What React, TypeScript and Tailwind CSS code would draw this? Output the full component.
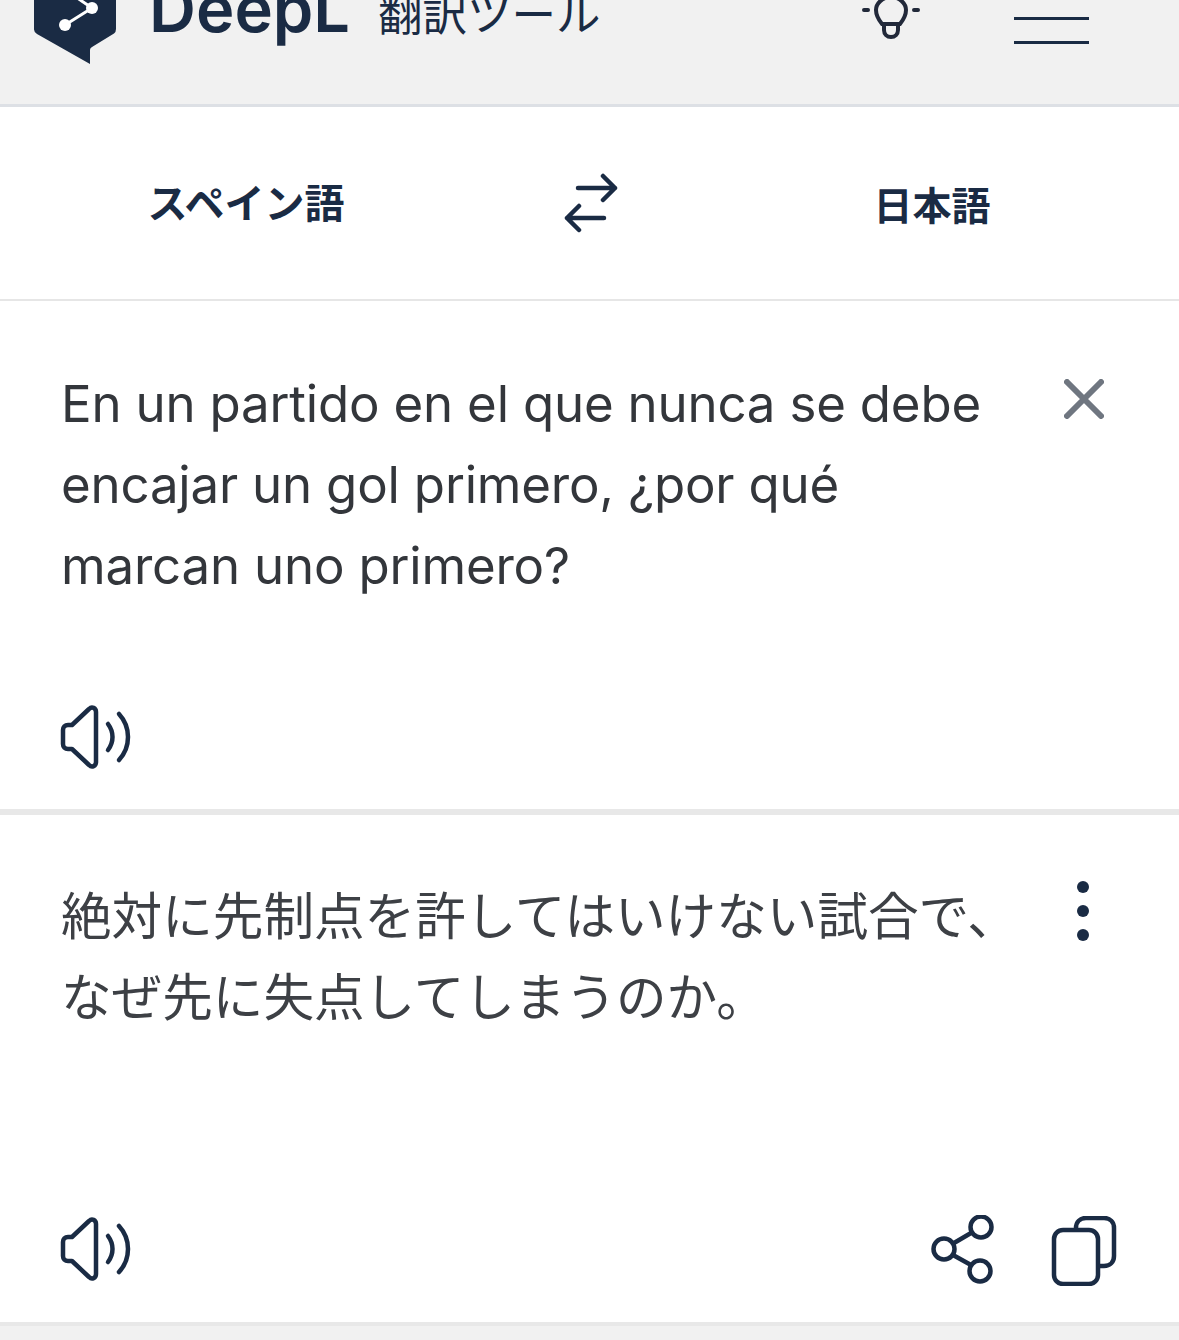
const navy = "#1a2b44";

function Logo() {
  return (
    <svg viewBox="0 0 90 100" className="h-[100px] w-[90px] shrink-0">
      <path d="M6 0H84a2 2 0 0 1 2 2V65q0 3-2 4.500L62 83q-2 1-2 3V100L7 70q-3-2-3-4.500V2a2 2 0 0 1 2-2z" fill={navy} />
      <path d="M35 61L62 44M62 44L40 29" stroke="#fff" strokeWidth="3" />
      <circle cx="62" cy="44" r="6" fill="#fff" />
      <circle cx="35" cy="61" r="6" fill="#fff" />
    </svg>
  );
}

function Bulb() {
  return (
    <svg viewBox="0 0 60 50" fill="none" stroke="#22293a" strokeWidth="4" strokeLinecap="round" className="h-[50px] w-[60px]">
      <path d="M3 20H7M53 20H57" />
      <path d="M21 34C17 29 15 25 15 20C15 13 22 7 30 7C38 7 45 13 45 20C45 25 43 29 39 34Z" />
      <path d="M23 34V40C23 44 26 47 30 47C34 47 37 44 37 40V34" />
    </svg>
  );
}

function Swap() {
  return (
    <svg viewBox="0 0 56 60" fill="none" stroke={navy} strokeWidth="4.500" strokeLinecap="round" strokeLinejoin="round" className="h-[60px] w-[56px]">
      <path d="M15 15H52M40 3L52 15L40 27" />
      <path d="M41 45H4M16 33L4 45L16 57" />
    </svg>
  );
}

function Speaker() {
  return (
    <svg viewBox="0 0 72 64" fill="none" stroke={navy} strokeWidth="4.500" strokeLinecap="round" strokeLinejoin="round" className="h-[64px] w-[72px]">
      <path d="M3 25C3 22 5 20 8 20H12L29 4C32 1 36 3 36 7V57C36 61 32 63 29 60L12 44H8C5 44 3 42 3 39Z" />
      <path d="M48 19C54 27 54 37 48 45" />
      <path d="M59 9C71 22 71 42 59 55" />
    </svg>
  );
}

function Share() {
  return (
    <svg viewBox="0 0 64 70" fill="none" stroke={navy} strokeWidth="4.500" className="h-[70px] w-[64px]">
      <circle cx="50" cy="12" r="10.500" />
      <circle cx="13" cy="34" r="10.500" />
      <circle cx="49" cy="56" r="10.500" />
      <path d="M23 28L40 18M22 40L40 50" />
    </svg>
  );
}

function Copy() {
  return (
    <svg viewBox="0 0 66 70" fill="none" stroke={navy} strokeWidth="4.500" className="h-[70px] w-[66px]">
      <rect x="3" y="14" width="44" height="54" rx="9" />
      <path d="M25 14V12C25 6 29 2 35 2H53C59 2 63 6 63 12V40C63 46 59 50 53 50H47" />
    </svg>
  );
}

export default function App() {
  return (
    <main className="h-[1340px] overflow-hidden bg-[#f1f1f1] font-['Inter','Noto_Sans_CJK_JP',sans-serif]">
      <header className="flex h-[107px] items-start overflow-hidden border-b-[3px] border-[#dde0e5] bg-[#f1f1f1] text-[#1a2b44]">
        <div className="ml-[30px] mt-[-36px]">
          <Logo />
        </div>
        <span className="ml-[29px] mt-[-29px] w-[199px] text-[65px] font-semibold leading-[75px]">DeepL</span>
        <span className="ml-[30px] mt-[-17px] text-[44.500px] leading-[64px]">翻訳ツール</span>
        <div className="ml-[260px] mt-[-10px]">
          <Bulb />
        </div>
        <div className="ml-[93px] mt-[17px] flex w-[75px] flex-col gap-[21px]">
          <div className="h-[3px] bg-[#1a2b44]" />
          <div className="h-[3px] bg-[#1a2b44]" />
        </div>
      </header>

      <section className="grid h-[194px] grid-cols-[492px_198px_1fr] items-center border-b-2 border-[#e6e6e6] bg-white font-bold text-[#1a2b44]">
        <div className="mt-[1px] text-center text-[40px]">スペイン語</div>
        <div className="flex justify-center">
          <Swap />
        </div>
        <div className="mt-[7px] pr-[5px] text-center text-[39px]">日本語</div>
      </section>

      <section className="relative h-[514px] border-b-[6px] border-[#e8e8e8] bg-white pl-[61px] pt-[62px]">
        <p className="w-[960px] text-[51px] leading-[81px] tracking-[-0.2px] text-[#33363b]">
          En un partido en el que nunca se debe encajar un gol primero, ¿por qué marcan uno primero?
        </p>
        <div className="absolute left-[60px] top-[404px]">
          <Speaker />
        </div>
        <svg viewBox="0 0 40 40" fill="none" stroke="#6f7680" strokeWidth="6" strokeLinecap="round" className="absolute left-[1064px] top-[78px] h-[40px] w-[40px]">
          <path d="M3 3L37 37M37 3L3 37" />
        </svg>
      </section>

      <section className="relative h-[511px] border-b-[4px] border-[#e8e8e8] bg-white pl-[61px] pt-[61px]">
        <p className="w-[960px] text-[50.600px] leading-[81px] text-[#3d4045]">
          絶対に先制点を許してはいけない試合で、なぜ先に失点してしまうのか。
        </p>
        <div className="absolute left-[1077px] top-[66px] flex flex-col gap-[12px]">
          <span className="h-[12px] w-[12px] rounded-full bg-[#1a2b44]" />
          <span className="h-[12px] w-[12px] rounded-full bg-[#1a2b44]" />
          <span className="h-[12px] w-[12px] rounded-full bg-[#1a2b44]" />
        </div>
        <div className="absolute left-[60px] top-[402px]">
          <Speaker />
        </div>
        <div className="absolute left-[931px] top-[400px]">
          <Share />
        </div>
        <div className="absolute left-[1051px] top-[401px]">
          <Copy />
        </div>
      </section>
    </main>
  );
}
